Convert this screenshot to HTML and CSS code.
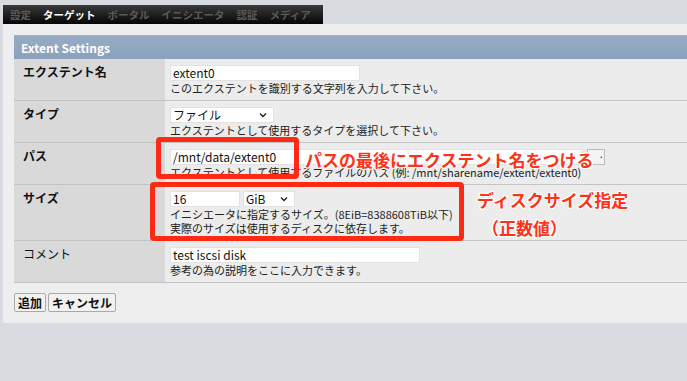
FILE: index.html
```html
<!DOCTYPE html>
<html lang="ja">
<head>
    <meta charset="UTF-8">
    <meta name="viewport" content="width=device-width, initial-scale=1.0">
    <title>Extent Settings</title>
    <link rel="stylesheet" href="styles.css">
</head>
<body>
    <div class="tabs">
        <span class="tab">設定</span>
        <span class="tab active">ターゲット</span>
        <span class="tab">ポータル</span>
        <span class="tab">イニシエータ</span>
        <span class="tab">認証</span>
        <span class="tab">メディア</span>
    </div>
    <div class="panel">
        <div class="section-head">Extent Settings</div>
        <table class="settings">
            <tr class="row">
                <th>エクステント名</th>
                <td>
                    <div class="field"><span class="input w-name">extent0</span></div>
                    <div class="desc">このエクステントを識別する文字列を入力して下さい。</div>
                </td>
            </tr>
            <tr class="row">
                <th>タイプ</th>
                <td>
                    <div class="field">
                        <span class="select w-type">ファイル<svg width="8" height="6" viewBox="0 0 8 6"><path d="M1 1.5 L4 4.5 L7 1.5" fill="none" stroke="#222" stroke-width="1.4"/></svg></span>
                    </div>
                    <div class="desc">エクステントとして使用するタイプを選択して下さい。</div>
                </td>
            </tr>
            <tr class="row">
                <th>パス</th>
                <td>
                    <div class="field">
                        <span class="input w-path">/mnt/data/extent0</span>
                        <span class="browse">·</span>
                    </div>
                    <div class="desc">エクステントとして使用するファイルのパス (例: /mnt/sharename/extent/extent0)</div>
                </td>
            </tr>
            <tr class="row row-tall">
                <th>サイズ</th>
                <td>
                    <div class="field">
                        <span class="input w-size">16</span>
                        <span class="select w-unit">GiB<svg width="8" height="6" viewBox="0 0 8 6"><path d="M1 1.5 L4 4.5 L7 1.5" fill="none" stroke="#222" stroke-width="1.4"/></svg></span>
                    </div>
                    <div class="desc">イニシエータに指定するサイズ。(8EiB=8388608TiB以下)</div>
                    <div class="desc">実際のサイズは使用するディスクに依存します。</div>
                </td>
            </tr>
            <tr class="row">
                <th class="plain">コメント</th>
                <td>
                    <div class="field"><span class="input w-comment">test iscsi disk</span></div>
                    <div class="desc">参考の為の説明をここに入力できます。</div>
                </td>
            </tr>
        </table>
        <div class="actions">
            <button class="btn">追加</button>
            <button class="btn">キャンセル</button>
        </div>
    </div>

    <!-- annotations drawn over the screenshot -->
    <div class="mark mark-path"></div>
    <div class="mark mark-size"></div>
    <div class="note note-path">パスの最後にエクステント名をつける</div>
    <div class="note note-size">ディスクサイズ指定</div>
    <div class="note note-num">（正数値）</div>
</body>
</html>
```

FILE: styles.css
```css
body {
    margin: 0;
    background-color: #d8dbdf;
    font-family: "Noto Sans CJK JP", "Noto Sans", sans-serif;
    color: #111;
    height: 381px;
    overflow: hidden;
    position: relative;
}
.tabs {
    margin: 5px 0 0 3px;
    width: 320px;
    height: 19px;
    background: linear-gradient(#3a3a3a, #050505);
    display: flex;
    align-items: center;
    padding-left: 7px;
    box-sizing: border-box;
    overflow: hidden;
}
.tab {
    font-size: 10.5px;
    font-weight: bold;
    color: #5a5a5a;
    margin-right: 12px;
    line-height: 19px;
    white-space: nowrap;
    flex-shrink: 0;
}
.tab.active {
    color: #fff;
}
.panel {
    margin-left: 3px;
    background-color: #eeeeee;
    padding: 11px 0 11px 11px;
}
.section-head {
    height: 24px;
    box-sizing: border-box;
    border-top: 1px solid #a3b1c3;
    background: linear-gradient(#97abc4, #8ba1bc);
    color: #fff;
    font-size: 12px;
    font-weight: bold;
    padding-left: 7px;
    line-height: 23px;
}
.settings {
    width: 100%;
    border-collapse: collapse;
}
.settings .row {
    border-bottom: 1px solid #c2c2c2;
}
.settings th {
    width: 151px;
    background-color: #d9d9d9;
    text-align: left;
    vertical-align: top;
    font-size: 12px;
    font-weight: bold;
    padding: 6px 0 0 9px;
    box-sizing: border-box;
    line-height: 14px;
}
.settings th.plain {
    font-weight: normal;
}
.settings td {
    background-color: #ececec;
    vertical-align: top;
    padding: 6px 5px 5px 5px;
    height: 30px;
}
.row-tall td {
    padding-bottom: 5px;
}
.field {
    display: flex;
    align-items: center;
    gap: 3px;
    height: 16px;
}
.input, .select {
    height: 16px;
    box-sizing: border-box;
    background-color: #fff;
    border: 1px solid #e2e2e2;
    font-size: 12px;
    line-height: 14px;
    padding-left: 2px;
    color: #111;
}
.select {
    display: inline-flex;
    align-items: center;
    justify-content: space-between;
    padding-right: 6px;
}
.w-name { width: 190px; }
.w-type { width: 104px; }
.w-path { width: 413px; }
.w-size { width: 70px; }
.w-unit { width: 52px; }
.w-comment { width: 250px; }
.browse {
    width: 18px;
    height: 16px;
    box-sizing: border-box;
    border: 1px solid #bbb;
    background-color: #f4f4f4;
    font-size: 10px;
    line-height: 14px;
    text-align: right;
    margin-left: 1px;
}
.desc {
    font-size: 11px;
    line-height: 14px;
    color: #222;
    white-space: nowrap;
}
.actions {
    display: flex;
    gap: 2px;
    margin-top: 10px;
}
.btn {
    font-family: inherit;
    font-size: 12px;
    font-weight: bold;
    height: 19px;
    padding: 0 3px;
    background-color: #f2f2f2;
    border: 1px solid #a9a9a9;
    border-radius: 2px;
    color: #111;
    line-height: 16px;
}
.mark {
    position: absolute;
    border: 5px solid #ff2a14;
    border-radius: 4px;
    box-sizing: border-box;
}
.mark-path {
    left: 156px;
    top: 137px;
    width: 143px;
    height: 42px;
}
.mark-size {
    left: 150px;
    top: 182px;
    width: 314px;
    height: 59px;
}
.note {
    position: absolute;
    color: #ff3219;
    font-size: 17px;
    font-weight: bold;
    white-space: nowrap;
    line-height: 20px;
    text-shadow: 1px 1px 0 #fff, -1px -1px 0 #fff, 1px -1px 0 #fff, -1px 1px 0 #fff, 0 1px 0 #fff, 0 -1px 0 #fff, 1px 0 0 #fff, -1px 0 0 #fff;
}
.note-path {
    left: 305px;
    top: 150px;
}
.note-size {
    left: 477px;
    top: 190px;
}
.note-num {
    left: 482px;
    top: 218px;
}
```
